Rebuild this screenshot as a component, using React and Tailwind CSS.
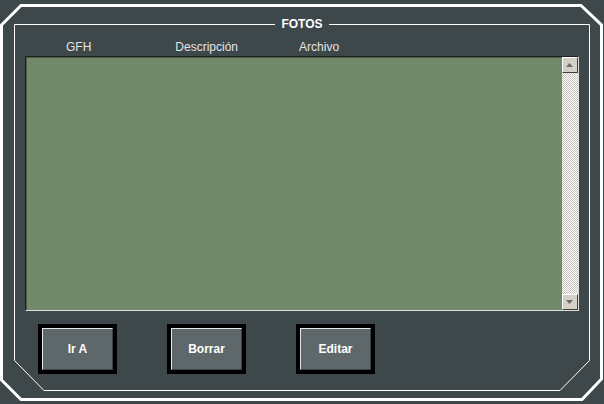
import React from "react";

function ArrowBtn({ down }) {
  return (
    <div className="w-[16px] h-[16px] bg-[#d4d0c8] border-t border-l border-t-white border-l-white border-r border-b border-r-[#404040] border-b-[#404040] flex items-center justify-center">
      <svg width="8" height="5" viewBox="0 0 8 5">
        {down ? (
          <path d="M0 0H7L3.5 4Z" fill="#6b6b6b" />
        ) : (
          <path d="M3.5 0L7 4H0Z" fill="#6b6b6b" />
        )}
      </svg>
    </div>
  );
}

function Btn({ label }) {
  return (
    <div className="w-[79px] h-[50px] bg-black p-[4px]">
      <div className="w-full h-full bg-[#5e686b] border-t border-l border-t-[#e8e8e8] border-l-[#e8e8e8] border-r border-b border-r-[#3a4244] border-b-[#3a4244] flex items-center justify-center text-white font-bold text-[12px]">
        {label}
      </div>
    </div>
  );
}

export default function Fotos() {
  return (
    <div className="relative w-[604px] h-[404px] bg-[#3e484b] overflow-hidden font-['Liberation_Sans',Arial,sans-serif]">
      {/* frame lines */}
      <svg className="absolute inset-0 pointer-events-none" width="604" height="404">
        <path d="M21 5.5H581L601.5 25V379L582 399.5H21L1.5 380V25Z" fill="none" stroke="#fff" strokeWidth="3" />
        <path d="M275 24.5H14.5V360.5L44 390.5H560L589.5 360.5V24.5H329" fill="none" stroke="#fff" strokeWidth="1" />
      </svg>
      <div className="absolute left-[275px] w-[54px] top-[17px] text-center text-white font-bold text-[12px] leading-[14px]">
        FOTOS
      </div>

      <div className="relative flex flex-col pt-[38px] pl-[25px]">
        <div className="flex h-[18px] items-center text-[12px] text-[#e4e4e4]">
          <span className="ml-[41px]">GFH</span>
          <span className="ml-[84px]">Descripción</span>
          <span className="ml-[61px]">Archivo</span>
        </div>

        <div className="w-[554px] h-[255px] flex border-t border-l border-t-[#1c2224] border-l-[#1c2224] border-b border-r border-b-[#dcdcdc] border-r-[#dcdcdc]">
          <div className="flex-1 bg-[#728a6a] border-t border-l border-[#4c5a48]" />
          <div className="w-[16px] flex flex-col bg-[repeating-conic-gradient(#c8c4bc_0_25%,#ffffff_0_50%)] bg-[length:2px_2px]">
            <ArrowBtn />
            <div className="flex-1" />
            <ArrowBtn down />
          </div>
        </div>

        <div className="flex gap-[50px] mt-[13px] ml-[13px]">
          <Btn label="Ir A" />
          <Btn label="Borrar" />
          <Btn label="Editar" />
        </div>
      </div>
    </div>
  );
}
